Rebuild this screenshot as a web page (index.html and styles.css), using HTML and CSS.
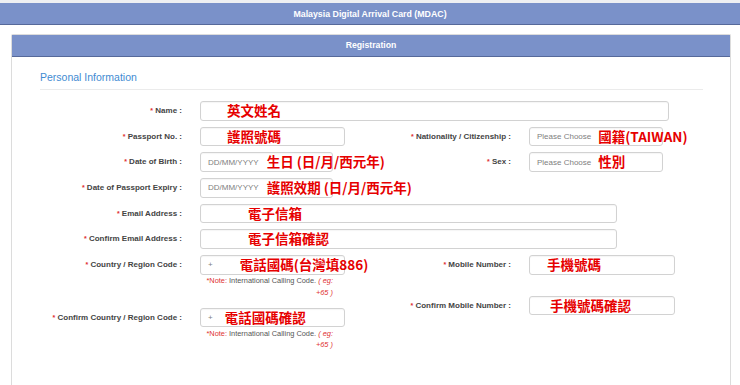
FILE: index.html
```html
<!DOCTYPE html>
<html lang="en">
<head>
    <meta charset="UTF-8">
    <meta name="viewport" content="width=device-width, initial-scale=1.0">
    <title>Malaysia Digital Arrival Card (MDAC)</title>
    <link rel="stylesheet" href="styles.css">
</head>
<body>

<div class="topbar">Malaysia Digital Arrival Card (MDAC)</div>

<div class="panel">
    <div class="panel-head">Registration</div>

    <div class="panel-body">
        <div class="section-title">Personal Information</div>

        <div class="row">
            <label class="lbl"><span class="req">*</span> Name :</label>
            <div class="field w-name"><span class="mark m-19">英文姓名</span></div>
        </div>

        <div class="cols">
            <div class="col col-left">
                <div class="row">
                    <label class="lbl"><span class="req">*</span> Passport No. :</label>
                    <div class="field w-code"><span class="mark m-19">護照號碼</span></div>
                </div>
                <div class="row">
                    <label class="lbl"><span class="req">*</span> Date of Birth :</label>
                    <div class="field w-date"><span class="hint">DD/MM/YYYY</span><span class="mark m-8">生日 (日/月/西元年)</span></div>
                </div>
                <div class="row">
                    <label class="lbl"><span class="req">*</span> Date of Passport Expiry :</label>
                    <div class="field w-date"><span class="hint">DD/MM/YYYY</span><span class="mark m-8">護照效期 (日/月/西元年)</span></div>
                </div>
            </div>
            <div class="col col-right">
                <div class="row">
                    <label class="lbl"><span class="req">*</span> Nationality / Citizenship :</label>
                    <div class="field w-choose"><span class="hint">Please Choose</span><span class="mark m-7">國籍(TAIWAN)</span></div>
                </div>
                <div class="row">
                    <label class="lbl"><span class="req">*</span> Sex :</label>
                    <div class="field w-choose"><span class="hint">Please Choose</span><span class="mark m-7">性別</span></div>
                </div>
            </div>
        </div>

        <div class="row">
            <label class="lbl"><span class="req">*</span> Email Address :</label>
            <div class="field w-email"><span class="mark m-40">電子信箱</span></div>
        </div>
        <div class="row">
            <label class="lbl"><span class="req">*</span> Confirm Email Address :</label>
            <div class="field w-email"><span class="mark m-40">電子信箱確認</span></div>
        </div>

        <div class="cols">
            <div class="col col-left">
                <div class="row">
                    <label class="lbl"><span class="req">*</span> Country / Region Code :</label>
                    <div class="field-wrap">
                        <div class="field w-code"><span class="hint">+</span><span class="mark m-27">電話國碼(台灣填886)</span></div>
                        <div class="note"><span class="red">*Note:</span> International Calling Code. <em class="red">( eg: +65 )</em></div>
                    </div>
                </div>
                <div class="row">
                    <label class="lbl"><span class="req">*</span> Confirm Country / Region Code :</label>
                    <div class="field-wrap">
                        <div class="field w-code"><span class="hint">+</span><span class="mark m-12">電話國碼確認</span></div>
                        <div class="note"><span class="red">*Note:</span> International Calling Code. <em class="red">( eg: +65 )</em></div>
                    </div>
                </div>
            </div>
            <div class="col col-right">
                <div class="row row-spaced">
                    <label class="lbl"><span class="req">*</span> Mobile Number :</label>
                    <div class="field w-mobile"><span class="mark m-10">手機號碼</span></div>
                </div>
                <div class="row">
                    <label class="lbl"><span class="req">*</span> Confirm Mobile Number :</label>
                    <div class="field w-mobile"><span class="mark m-13">手機號碼確認</span></div>
                </div>
            </div>
        </div>
    </div>
</div>

</body>
</html>
```

FILE: styles.css
```css
body {
    margin: 0;
    font-family: 'Liberation Sans', Arial, sans-serif;
    background-color: #fff;
    color: #333;
    overflow: hidden;
}

.topbar {
    border-top: 3px solid #eeeff2;
    height: 21px;
    line-height: 22px;
    background-color: #7a91c9;
    border-bottom: 1px solid #56699a;
    color: #fff;
    font-size: 8.8px;
    font-weight: bold;
    text-align: center;
}

.panel {
    margin: 9px 9px 0 11px;
    border: 1px solid #dcdcdc;
    border-bottom: none;
    border-radius: 2px 2px 0 0;
    height: 351px;
}

.panel-head {
    height: 21px;
    line-height: 21px;
    background-color: #7a91c9;
    border-bottom: 1px solid #56699a;
    color: #fff;
    font-size: 8.7px;
    font-weight: bold;
    text-align: center;
}

.panel-body {
    padding: 0 27px 0 28px;
}

.section-title {
    padding-top: 13px;
    padding-bottom: 5px;
    line-height: 14px;
    font-size: 10.5px;
    color: #3f8bd2;
    border-bottom: 1px solid #ebebeb;
    margin-bottom: 11px;
}

.cols {
    display: flex;
}

.col-left {
    width: 329px;
}

.row {
    display: flex;
    align-items: flex-start;
    margin-bottom: 6.2px;
}

.row-spaced {
    margin-bottom: 21px;
}

.lbl {
    width: 142px;
    height: 19.5px;
    line-height: 19.5px;
    margin-right: 18px;
    text-align: right;
    font-size: 8px;
    font-weight: bold;
    color: #444;
    white-space: nowrap;
}

.req {
    color: #e03030;
    font-size: 7px;
}

.field {
    box-sizing: border-box;
    height: 19.5px;
    display: flex;
    align-items: center;
    padding-left: 7px;
    border: 1px solid #d2d2d2;
    border-radius: 3px;
    background-color: #fff;
    box-shadow: inset 0 1px 1px rgba(0, 0, 0, 0.04);
    white-space: nowrap;
}

.w-name { width: 469px; }
.w-code { width: 145px; }
.w-date { width: 133px; }
.w-email { width: 417px; }
.w-choose { width: 134px; }
.w-mobile { width: 146px; }

.hint {
    font-size: 8px;
    color: #808080;
}

.mark {
    font-family: 'Noto Sans CJK TC', 'Noto Sans', sans-serif;
    font-size: 13.5px;
    font-weight: bold;
    color: #e60000;
    line-height: 1;
}

.m-7 { margin-left: 7px; }
.m-8 { margin-left: 8px; }
.m-10 { margin-left: 10px; }
.m-12 { margin-left: 12px; }
.m-13 { margin-left: 13px; }
.m-19 { margin-left: 19px; }
.m-27 { margin-left: 27px; }
.m-40 { margin-left: 40px; }

.note {
    width: 133px;
    margin-top: 0.5px;
    margin-bottom: 3.3px;
    font-size: 7.4px;
    line-height: 11.5px;
    color: #555;
    text-align: right;
}

.red {
    color: #e03030;
}
```
